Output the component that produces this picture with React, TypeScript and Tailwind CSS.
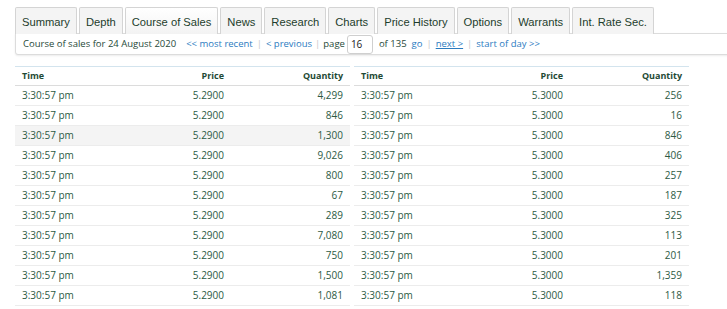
import React from "react";

const tabs = [
  "Summary",
  "Depth",
  "Course of Sales",
  "News",
  "Research",
  "Charts",
  "Price History",
  "Options",
  "Warrants",
  "Int. Rate Sec.",
];

const left = ["4,299", "846", "1,300", "9,026", "800", "67", "289", "7,080", "750", "1,500", "1,081"];
const right = ["256", "16", "846", "406", "257", "187", "325", "113", "201", "1,359", "118"];

function SalesTable({ price, qty, hoverRow }: { price: string; qty: string[]; hoverRow?: number }) {
  return (
    <div className="w-full">
      <div className="grid h-[20px] grid-cols-[100px_102px_1fr] items-center border-t border-b border-t-[#d3e4ee] border-b-[#dcdcdc] px-[7px] text-[9px] font-bold text-[#1e4a35]">
        <div>Time</div>
        <div className="text-right">Price</div>
        <div className="text-right">Quantity</div>
      </div>
      {qty.map((q, i) => (
        <div
          key={i}
          className={`grid h-[20px] grid-cols-[100px_102px_1fr] items-center border-b border-[#ececec] px-[7px] text-[10px] text-[#2c5a44] ${
            i === hoverRow ? "bg-[#f4f4f4]" : ""
          }`}
        >
          <div>3:30:57 pm</div>
          <div className="text-right">{price}</div>
          <div className="text-right">{q}</div>
        </div>
      ))}
    </div>
  );
}

export default function App() {
  return (
    <div className="h-[309px] w-[727px] overflow-hidden bg-white pt-[7px] pl-[15px] font-['Open_Sans',sans-serif]">
      <div className="flex gap-[2px]">
        {tabs.map((t) => {
          const active = t === "Course of Sales";
          return (
            <div
              key={t}
              className={`h-[27px] rounded-t-[2px] border border-b-0 border-[#d4d4d4] px-[6px] pt-[6px] font-['Liberation_Sans',sans-serif] text-[11.2px] text-[#1d3d2c] ${
                active ? "relative z-10 bg-gradient-to-b from-white to-[#f3f3f3]" : "bg-[#f4f4f4]"
              }`}
            >
              {t}
            </div>
          );
        })}
      </div>
      <div className="-mt-px flex h-[22px] w-[740px] items-center rounded-bl-[3px] border border-[#dcdcdc] bg-white pl-[7px] text-[9.5px] text-[#274a39] shadow-[0_1px_2px_rgba(0,0,0,0.08)]">
        <span>Course of sales for 24 August 2020</span>
        <span className="ml-[10px] text-[#2b7bbf]">&lt;&lt; most recent</span>
        <span className="mx-[4px] text-[#c8c8c8]">|</span>
        <span className="text-[#2b7bbf]">&lt; previous</span>
        <span className="mx-[3px] text-[#c8c8c8]">|</span>
        <span>page</span>
        <span className="ml-[2px] flex h-[19px] w-[26px] items-center rounded-[3px] border border-[#cfcfcf] pl-[3px] text-[10px] text-[#222]">16</span>
        <span className="ml-[6px]">of 135</span>
        <span className="ml-[5px] text-[#2b7bbf]">go</span>
        <span className="mx-[4px] text-[#c8c8c8]">|</span>
        <span className="text-[#2b7bbf] underline">next &gt;</span>
        <span className="mx-[4px] text-[#c8c8c8]">|</span>
        <span className="text-[#2b7bbf]">start of day &gt;&gt;</span>
      </div>
      <div className="mt-[11px] grid w-[674px] grid-cols-2 gap-[4px]">
        <SalesTable price="5.2900" qty={left} hoverRow={2} />
        <SalesTable price="5.3000" qty={right} />
      </div>
    </div>
  );
}
